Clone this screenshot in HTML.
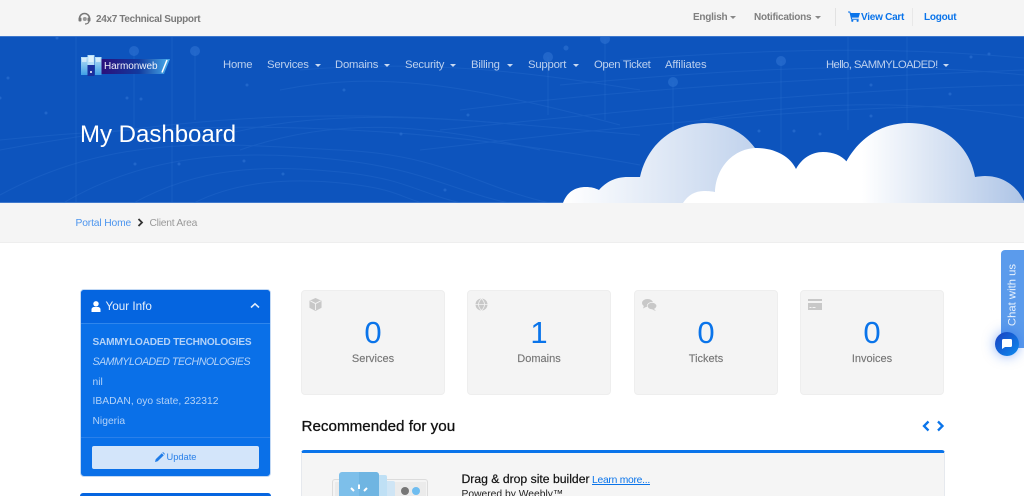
<!DOCTYPE html>
<html lang="en"><head><meta charset="utf-8"><title>My Dashboard</title>
<style>
html{margin:0;padding:0;width:1024px;height:496px;overflow:hidden;background:#fff}
body{margin:0;padding:0;width:1024px;height:496px;overflow:hidden;position:relative;background:#fff;font-family:"Liberation Sans",sans-serif}
.t{position:absolute;white-space:nowrap;line-height:1}
.a{position:absolute}
.car{position:absolute;width:0;height:0;border-left:3px solid transparent;border-right:3px solid transparent;border-top:3px solid currentColor}
.card{position:absolute;top:290px;width:142px;height:103px;background:#f4f4f4;border:1px solid #eeeeee;border-radius:4px}
.num{position:absolute;left:0;right:0;top:26px;text-align:center;font-size:31px;line-height:32px;color:#0a74ea}
.lab{position:absolute;left:0;right:0;top:61px;text-align:center;font-size:11px;line-height:14px;color:#777;-webkit-text-stroke:.15px #777}
.nav{color:#bcd0ee;font-size:11.3px;top:60px;letter-spacing:-.2px}
.top{font-size:10px;font-weight:700;letter-spacing:-.25px}
.sb{color:#b3d2f8;left:92.500px}
</style></head><body>
<div class="a" style="left:0;top:0;width:1024px;height:36px;background:#f5f5f5"></div>

<svg class="a" style="left:78px;top:12px" width="13" height="13" viewBox="0 0 13 13"><path d="M1.500 6.500a5 5 0 0 1 10 0" fill="none" stroke="#777" stroke-width="1.500"/><rect x="0.500" y="5.500" width="3" height="4" rx="1" fill="#777"/><rect x="9.500" y="5.500" width="3" height="4" rx="1" fill="#777"/><path d="M11 9c0 2-2 3-4 3" fill="none" stroke="#777" stroke-width="1.200"/><circle cx="6.800" cy="7" r="2" fill="#999"/></svg>
<div class="t top" style="left:96px;color:#7a7a7a;top:15px;letter-spacing:-.33px">24x7 Technical Support</div>

<div class="t top" style="left:693px;top:13px;color:#7f7f7f">English</div>
<div class="car" style="left:729.500px;top:16px;color:#888"></div>
<div class="t top" style="left:754px;top:13px;color:#7f7f7f">Notifications</div>
<div class="car" style="left:815px;top:16px;color:#888"></div>
<div class="a" style="left:835px;top:8px;width:1px;height:18px;background:#e2e2e2"></div>
<svg class="a" style="left:848px;top:11px" width="12" height="11" viewBox="0 0 12 11"><path d="M0 .5h2.200l.5 1.500H12l-1.400 4.600H3.800l.3 1.200h6.600v1H3.200L1.500 1.500H0z" fill="#0a74ea"/><circle cx="4.300" cy="9.800" r="1.100" fill="#0a74ea"/><circle cx="9.600" cy="9.800" r="1.100" fill="#0a74ea"/></svg>
<div class="t top" style="left:861px;top:13px;color:#0a74ea">View Cart</div>
<div class="a" style="left:912px;top:8px;width:1px;height:18px;background:#e8e8e8"></div>
<div class="t top" style="left:924px;top:13px;color:#0a74ea">Logout</div>

<!-- hero -->
<div class="a" style="left:0;top:36px;width:1024px;height:167px;background:#0d54bd;border-top:1px solid #3f78cc;border-bottom:1px solid #3f78cc;box-sizing:border-box;overflow:hidden"></div>
<svg class="a" style="left:0;top:37px" width="1024" height="166" viewBox="0 37 1024 166">
<defs>
<linearGradient id="g1" gradientUnits="userSpaceOnUse" x1="565" y1="0" x2="770" y2="0"><stop offset="0" stop-color="#fff"/><stop offset="1" stop-color="#bccfeb"/></linearGradient>
<linearGradient id="g2" gradientUnits="userSpaceOnUse" x1="862" y1="0" x2="1024" y2="0"><stop offset="0" stop-color="#fff"/><stop offset="1" stop-color="#adc4e6"/></linearGradient>
</defs>
<g fill="none" stroke="#2e73d2" stroke-width="1" opacity=".3">
<path d="M0 195C120 130 230 145 340 150S480 190 560 205"/>
<path d="M60 205C150 150 250 150 340 160S460 195 520 205"/>
<path d="M130 205C200 165 270 165 340 172S420 195 470 205"/>
<path d="M190 205C240 178 300 178 350 184S400 198 430 205"/>
<path d="M240 150C340 115 430 125 540 150"/>
<path d="M190 145C320 100 460 120 640 135"/>
<path d="M0 150C160 120 320 105 520 125"/>
<path d="M280 90C380 70 470 85 620 125"/>
<path d="M0 140C200 120 400 120 640 165"/>
<path d="M460 110C620 90 780 80 1024 70"/>
<path d="M440 130C640 110 820 90 1024 85"/>
<path d="M420 150C600 130 800 105 1024 105"/>
<path d="M620 60C760 50 880 45 1024 58"/>
<path d="M560 85C720 70 880 60 1024 75"/>
<path d="M700 120C820 100 920 100 1024 118"/>
<path d="M300 70C420 60 520 70 640 90"/>
</g>
<g stroke="#2e73d2" stroke-width="1" opacity=".35">
<path d="M76 37V202M134 51V135M172 37V202M195 51V120M548 57V115M605 39V120M673 82V130M781 61V160M848 37V130M907 37V130"/>
</g>
<g fill="#2a6fd0" opacity=".7">
<circle cx="134" cy="51" r="5"/><circle cx="195" cy="51" r="5"/><circle cx="605" cy="39" r="5"/><circle cx="548" cy="57" r="5"/><circle cx="673" cy="82" r="5"/><circle cx="781" cy="61" r="5"/><circle cx="566" cy="48" r="2.500"/>
<circle cx="8" cy="78" r="1.500"/><circle cx="46" cy="113" r="1.500"/><circle cx="127" cy="98" r="1.500"/><circle cx="141" cy="99" r="1.500"/><circle cx="247" cy="85" r="1.500"/><circle cx="344" cy="90" r="1.500"/><circle cx="401" cy="134" r="1.500"/><circle cx="135" cy="164" r="1.500"/><circle cx="179" cy="164" r="1.500"/><circle cx="244" cy="161" r="1.500"/><circle cx="283" cy="174" r="1.500"/><circle cx="445" cy="190" r="1.500"/><circle cx="468" cy="115" r="1.500"/><circle cx="57" cy="38" r="1.500"/><circle cx="0" cy="98" r="1.500"/><circle cx="759" cy="131" r="1.500"/><circle cx="794" cy="131" r="1.500"/><circle cx="820" cy="134" r="1.500"/><circle cx="871" cy="85" r="1.500"/><circle cx="871" cy="116" r="1.500"/><circle cx="950" cy="94" r="1.500"/><circle cx="971" cy="57" r="1.500"/><circle cx="989" cy="54" r="1.500"/>
</g>
<!-- back clouds -->
<path d="M563 203C567 192 575 187 586 187C591 187 595 188 599 190C606 182 615 177 628 177H640C647 145 673 123 705 123C737 123 765 145 770 190L770 203Z" fill="url(#g1)"/>
<path d="M840 203V168L846 162C860 137 882 123 909 123C943 123 970 146 975 177C978 176.500 982 176 985 176C1003 176 1017 186 1024 201V203Z" fill="url(#g2)"/>
<!-- front cloud -->
<path d="M683 203C688 195 695 191 704 191C709 191 713 191.500 715 192C716 167 734 148 757 148C774 148 790 156 796 169C802 158 812 152 823 152C833 152 841 155 847 162L862 203Z" fill="#fff"/>
</svg>

<!-- logo -->
<svg class="a" style="left:81px;top:55px" width="90" height="22" viewBox="0 0 90 22">
<defs><linearGradient id="lg" x1="0" x2="1" y1="0" y2="0"><stop offset="0" stop-color="#2b0f7a"/><stop offset=".55" stop-color="#123a9e"/><stop offset="1" stop-color="#4ab0ee"/></linearGradient>
<linearGradient id="lb" x1="0" x2="0" y1="0" y2="1"><stop offset="0" stop-color="#b8e0f8"/><stop offset="1" stop-color="#3f9fe6"/></linearGradient></defs>
<path d="M20 4H89L83 19H20Z" fill="url(#lg)"/>
<rect x="0" y="2" width="6.500" height="18" fill="url(#lb)"/><rect x="6.500" y="0" width="7" height="21" fill="#1b2f9e"/><rect x="6.500" y="0" width="7" height="10" fill="#b8e0f8"/><rect x="14" y="2" width="6.500" height="18" fill="url(#lb)"/>
<path d="M1 4h4.500M1 6h4.500M7.500 2h5M7.500 4h5M7.500 6h5M15 4h4.500M15 6h4.500" stroke="#fff" stroke-width="1"/>
<circle cx="10" cy="17" r="1" fill="#fff"/>
<path d="M86 5L81 17.500" stroke="#fff" stroke-width="1.500"/>
</svg>
<div class="t" style="left:104px;top:62px;font-size:10px;color:#f2f4fb;letter-spacing:-.05px">Harmonweb</div>

<!-- nav -->
<div class="t nav" style="left:223px">Home</div>
<div class="t nav" style="left:267px">Services</div><div class="car" style="left:314.500px;top:64px;color:#c9d9f1"></div>
<div class="t nav" style="left:335px">Domains</div><div class="car" style="left:384px;top:64px;color:#c9d9f1"></div>
<div class="t nav" style="left:405px">Security</div><div class="car" style="left:449.500px;top:64px;color:#c9d9f1"></div>
<div class="t nav" style="left:471px">Billing</div><div class="car" style="left:506.500px;top:64px;color:#c9d9f1"></div>
<div class="t nav" style="left:528px">Support</div><div class="car" style="left:572.500px;top:64px;color:#c9d9f1"></div>
<div class="t nav" style="left:594px;letter-spacing:-.35px">Open Ticket</div>
<div class="t nav" style="left:665px;letter-spacing:-.1px">Affiliates</div>
<div class="t nav" style="left:826px;letter-spacing:-.6px">Hello, SAMMYLOADED!</div><div class="car" style="left:943px;top:64px;color:#c9d9f1"></div>

<div class="t" style="left:80px;top:123px;font-size:24px;color:#fff">My Dashboard</div>

<!-- breadcrumb -->
<div class="a" style="left:0;top:203px;width:1024px;height:40px;background:#f5f5f5;border-bottom:1px solid #eeeeee;box-sizing:border-box"></div>
<div class="t" style="left:75.500px;top:219px;font-size:10.300px;color:#4c95ee;letter-spacing:-.15px">Portal Home</div>
<svg class="a" style="left:137px;top:218px" width="7" height="9" viewBox="0 0 7 9"><path d="M1.500 1L5 4.500L1.500 8" fill="none" stroke="#333" stroke-width="1.800"/></svg>
<div class="t" style="left:149.500px;top:219px;font-size:10.300px;color:#999;letter-spacing:-.25px">Client Area</div>

<!-- sidebar -->
<div class="a" style="left:80px;top:289px;width:191px;height:188px;background:#0a70e8;border:1px solid #c3d9f4;border-radius:4px;box-sizing:border-box"></div>
<div class="a" style="left:81px;top:290px;width:189px;height:33px;background:#0565e0;border-bottom:1px solid #2f86ec;border-radius:3px 3px 0 0"></div>
<svg class="a" style="left:91px;top:301px" width="10" height="11" viewBox="0 0 10 11"><circle cx="5" cy="2.800" r="2.700" fill="#fff"/><path d="M0.500 11V8.500C0.500 6.800 2 6 3 6H7C8 6 9.500 6.800 9.500 8.500V11Z" fill="#fff"/></svg>
<div class="t" style="left:105.500px;top:301px;font-size:11.700px;color:#e6effb">Your Info</div>
<svg class="a" style="left:250px;top:302px" width="10" height="7" viewBox="0 0 10 7"><path d="M1 5.500L5 1.800L9 5.500" fill="none" stroke="#dfeafa" stroke-width="1.600"/></svg>
<div class="t sb" style="top:338px;font-size:10.100px;font-weight:700;letter-spacing:-.2px">SAMMYLOADED TECHNOLOGIES</div>
<div class="t sb" style="top:357px;font-size:10.600px;font-style:italic;letter-spacing:-.5px">SAMMYLOADED TECHNOLOGIES</div>
<div class="t sb" style="top:378px;font-size:10.300px">nil</div>
<div class="t sb" style="top:397px;font-size:10.300px">IBADAN, oyo state, 232312</div>
<div class="t sb" style="top:417px;font-size:10.300px">Nigeria</div>
<div class="a" style="left:81px;top:437px;width:189px;height:1px;background:#2a80ea"></div>
<div class="a" style="left:92px;top:446px;width:167px;height:23px;background:#d3e5fa;border-radius:2px"></div>
<svg class="a" style="left:155px;top:452px" width="10" height="10" viewBox="0 0 10 10"><path d="M0 10L.7 7.300L6.800 1.200L8.800 3.200L2.700 9.300ZM7.400.6L8 0L10 2L9.400 2.600Z" fill="#1f7ce8"/></svg>
<div class="t" style="left:166.500px;top:453px;font-size:9.300px;color:#2a80e8">Update</div>
<div class="a" style="left:80px;top:493px;width:191px;height:3px;background:#0565e0;border-radius:3px 3px 0 0"></div>

<!-- cards -->
<div class="card" style="left:301px">
<svg class="a" style="left:7px;top:7px" width="13" height="13" viewBox="0 0 13 14"><path d="M6.500 0L13 3V10.500L6.500 14L0 10.500V3Z" fill="#c8c8c8"/><path d="M1 3.200L6.500 6L12 3.200M6.500 6V13" fill="none" stroke="#f4f4f4" stroke-width="1"/></svg>
<div class="num">0</div><div class="lab">Services</div></div>
<div class="card" style="left:467px">
<svg class="a" style="left:7px;top:7px" width="13" height="13" viewBox="0 0 13 13"><circle cx="6.500" cy="6.500" r="6" fill="#c8c8c8"/><path d="M.5 6.500h12M6.500.5c-4 4-4 8 0 12M6.500.5c4 4 4 8 0 12" fill="none" stroke="#f4f4f4" stroke-width=".8"/></svg>
<div class="num">1</div><div class="lab">Domains</div></div>
<div class="card" style="left:634px">
<svg class="a" style="left:7px;top:8px" width="15" height="12" viewBox="0 0 15 12"><ellipse cx="5.500" cy="4" rx="5.500" ry="4" fill="#c8c8c8"/><path d="M2 6.500L1 9.500L5 7.500Z" fill="#c8c8c8"/><ellipse cx="10" cy="7" rx="4.800" ry="3.600" fill="#c8c8c8" stroke="#f4f4f4" stroke-width=".8"/><path d="M12 10L14 12L10 10.500Z" fill="#c8c8c8"/></svg>
<div class="num">0</div><div class="lab">Tickets</div></div>
<div class="card" style="left:800px">
<svg class="a" style="left:7px;top:8px" width="15" height="11" viewBox="0 0 15 11"><rect x="0" y="0" width="14" height="2" fill="#c8c8c8"/><rect x="0" y="4" width="14" height="7" fill="#c8c8c8"/><path d="M1.500 8.500h2M4.500 8.500h3" stroke="#f4f4f4" stroke-width="1"/></svg>
<div class="num">0</div><div class="lab">Invoices</div></div>

<div class="t" style="left:301.500px;top:419px;font-size:15.200px;color:#111;-webkit-text-stroke:.3px #111">Recommended for you</div>
<svg class="a" style="left:921px;top:420px" width="24" height="12" viewBox="0 0 24 12"><path d="M7.500 1.500L3 6L7.500 10.500M17 1.500L21.500 6L17 10.500" fill="none" stroke="#0a74ea" stroke-width="2.300"/></svg>

<!-- recommended -->
<div class="a" style="left:301px;top:450px;width:644px;height:60px;background:#f5f5f5;border:1px solid #e6e9ee;border-top:3px solid #0a74ea;border-radius:3px 3px 0 0;box-sizing:border-box"></div>
<div class="a" style="left:332px;top:479px;width:96px;height:30px;background:#f4f4f4;border:1.500px solid #dcdcdc;border-radius:3px;box-sizing:border-box"></div>
<div class="a" style="left:335px;top:482px;width:91px;height:20px;background:#ebebeb"></div>
<div class="a" style="left:375px;top:481px;width:20px;height:20px;background:#cfe5f5;border-radius:2px"></div>
<div class="a" style="left:345px;top:475px;width:42px;height:25px;background:#bfe0f5;border-radius:2px"></div>
<div class="a" style="left:339px;top:472px;width:40px;height:30px;background:#7dbfea;border-radius:3px 3px 0 0"></div>
<div class="a" style="left:359px;top:472px;width:20px;height:30px;background:#6fb5e2;border-radius:0 3px 0 0"></div>
<svg class="a" style="left:349px;top:484px" width="20" height="12" viewBox="0 0 20 12"><path d="M10 .5V5M2 4L5 7M18 4L15 7" stroke="#fff" stroke-width="2" fill="none"/></svg>
<div class="a" style="left:401px;top:487px;width:8px;height:8px;border-radius:50%;background:#777"></div>
<div class="a" style="left:412px;top:487px;width:8px;height:8px;border-radius:50%;background:#6fbdf0"></div>
<div class="t" style="left:461.500px;top:473px;font-size:12.200px;color:#111;-webkit-text-stroke:.2px #111">Drag &amp; drop site builder</div>
<div class="t" style="left:592px;top:476px;font-size:10.300px;color:#0a74ea;text-decoration:underline;letter-spacing:-.25px">Learn more...</div>
<div class="t" style="left:461.500px;top:490px;font-size:10.300px;color:#222">Powered by Weebly™</div>

<!-- chat -->
<div class="a" style="left:1001px;top:250px;width:23px;height:98px;background:#5b9bec;border-radius:4px 0 0 4px"></div>
<div class="t" style="left:1012.500px;top:295px;font-size:11.300px;color:#eaf3fd;transform:translate(-50%,-50%) rotate(-90deg);transform-origin:50% 50%">Chat with us</div>
<div class="a" style="left:995px;top:332px;width:24px;height:24px;border-radius:50%;background:linear-gradient(135deg,#1a3fc0,#0d8cf0);box-shadow:0 0 12px rgba(30,100,240,.5)"></div>
<svg class="a" style="left:1002px;top:339px" width="10" height="10" viewBox="0 0 10 10"><path d="M1.500 0H8.500A1.500 1.500 0 0 1 10 1.500V6.500A1.500 1.500 0 0 1 8.500 8H3L0 10V1.500A1.500 1.500 0 0 1 1.500 0Z" fill="#fff"/></svg>
</body></html>
